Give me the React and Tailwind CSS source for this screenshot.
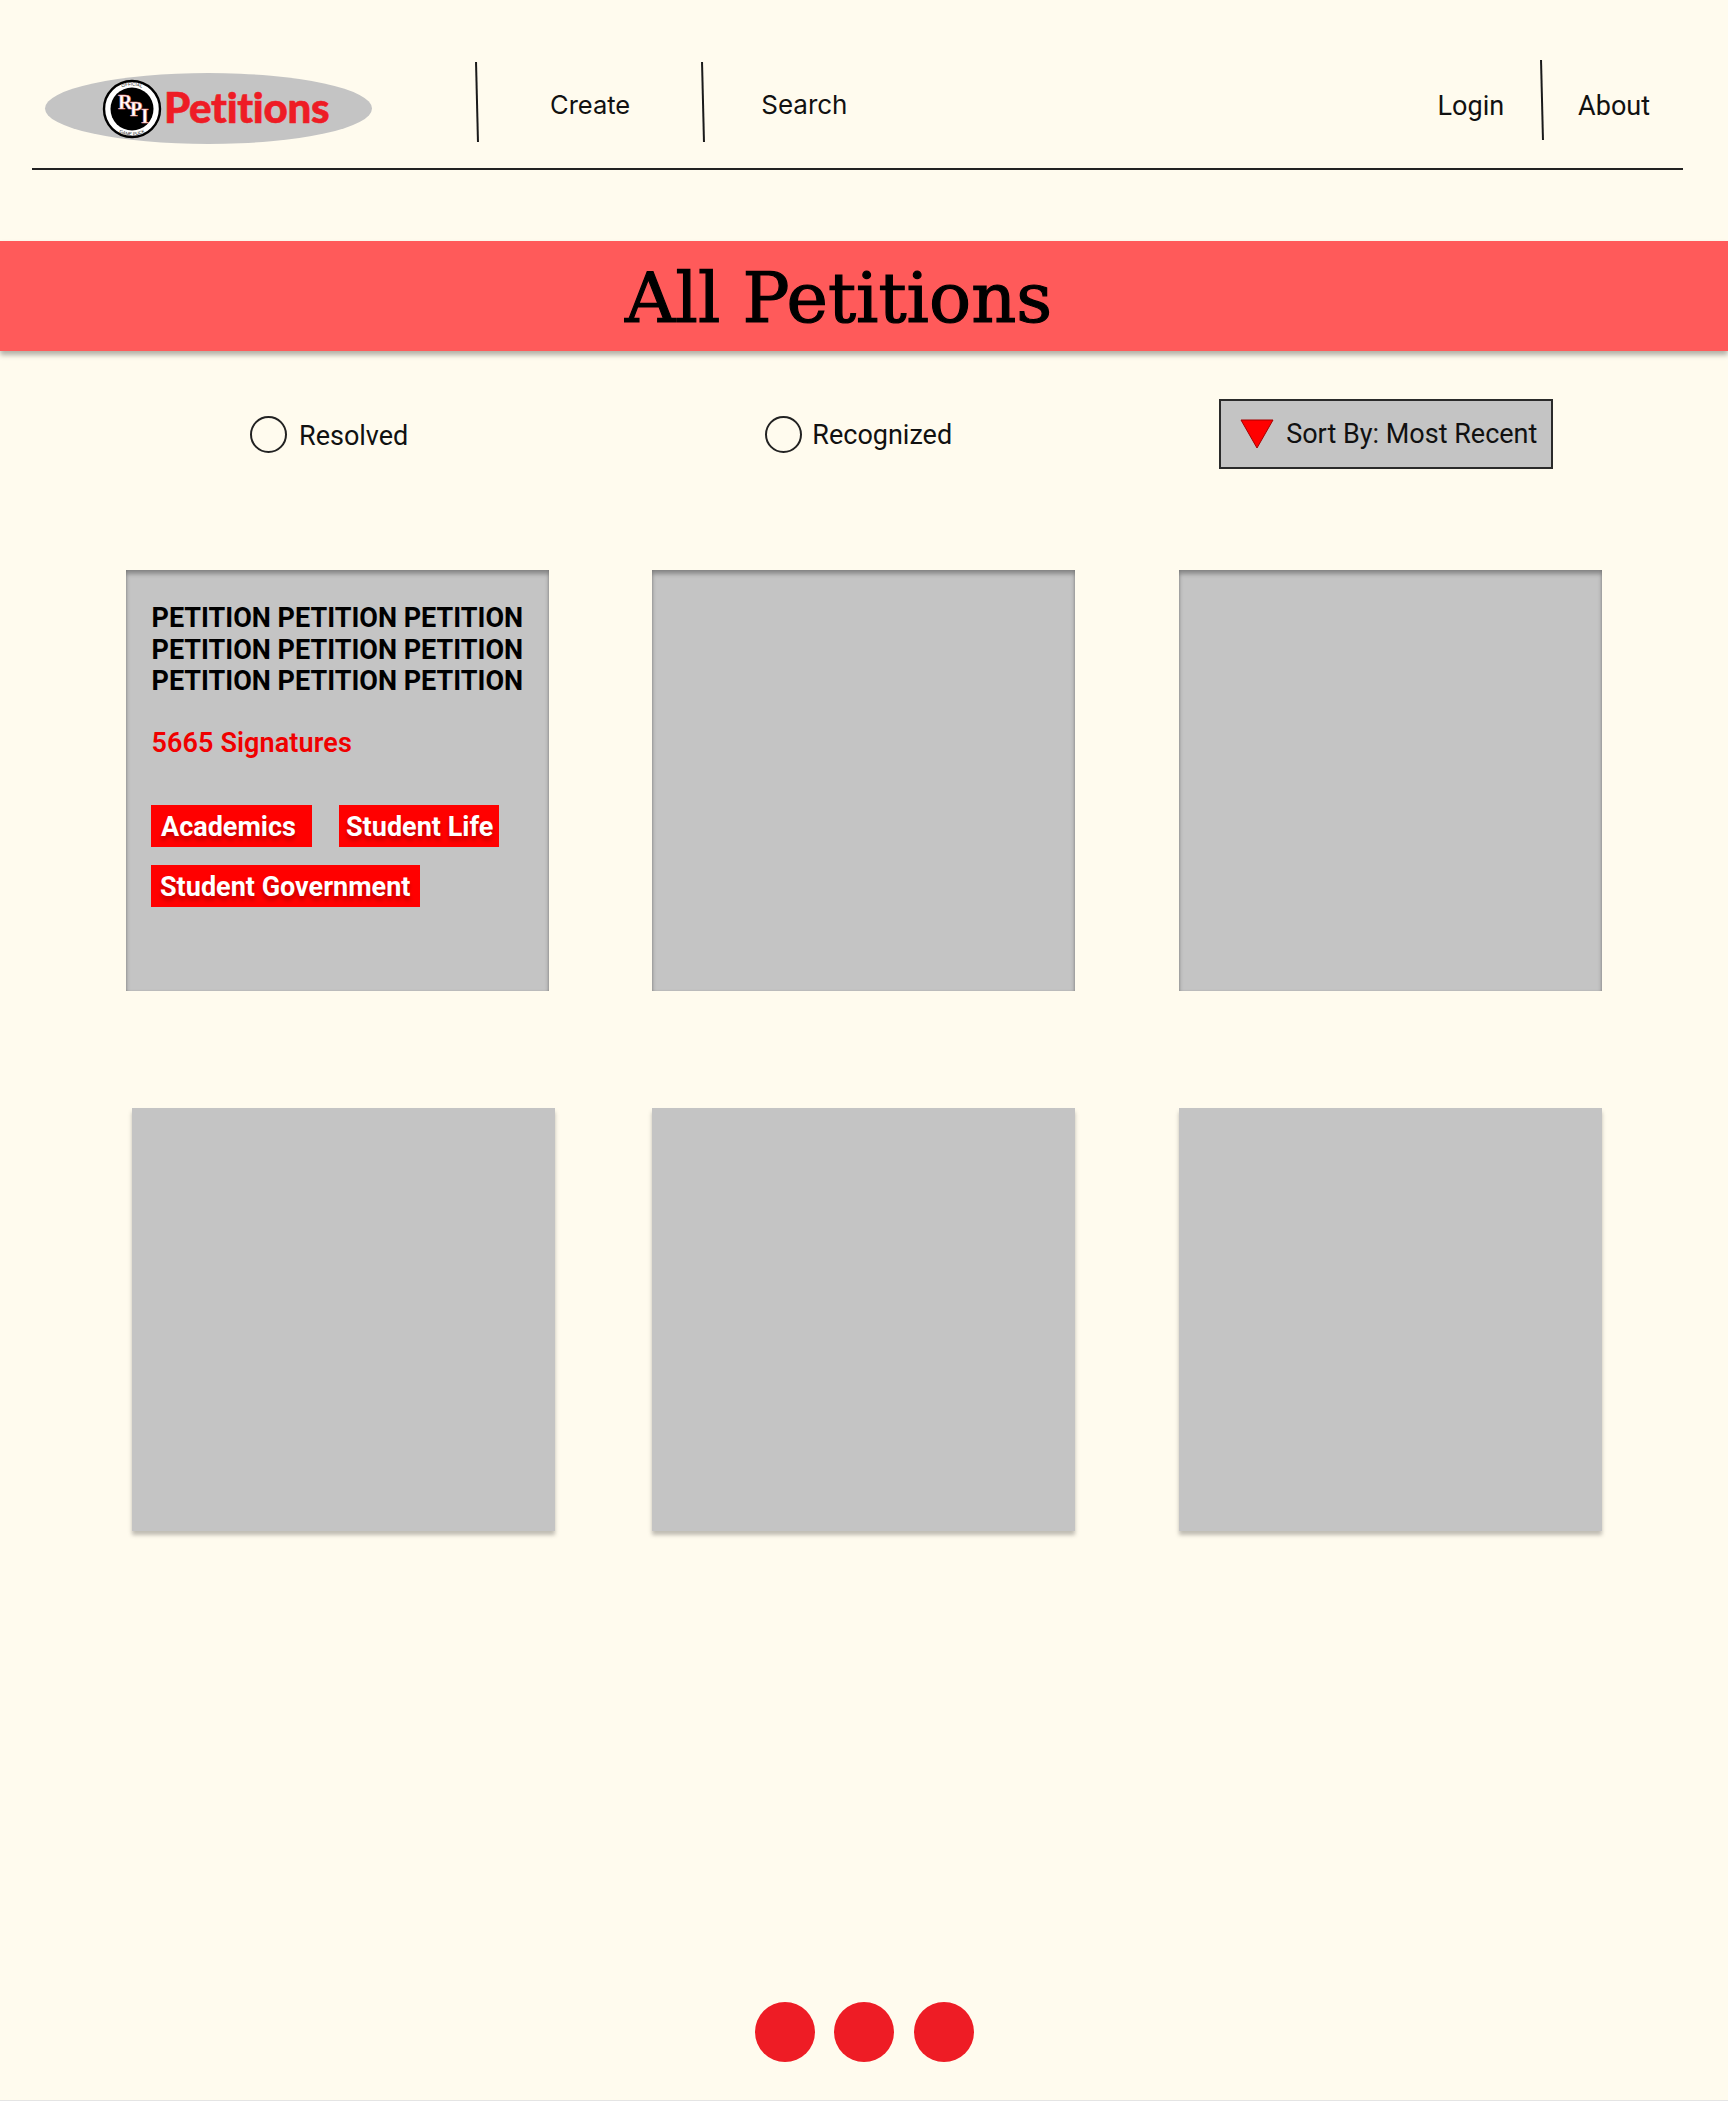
const roboto = "font-['Roboto',sans-serif]";

function Divider({ className }) {
  return <div className={"h-[80px] w-[2px] shrink-0 rotate-[-1.4deg] bg-[#1a1a1a] " + className} />;
}

function NavText({ children, className }) {
  return <span className={"leading-[32px] text-[#111] " + className}>{children}</span>;
}

function Logo() {
  return (
    <svg width="62" height="62" viewBox="0 0 62 62" className="shrink-0">
      <defs>
        <path id="arcTop" d="M7.5 31a23.5 23.5 0 0 1 47 0" />
        <path id="arcBottom" d="M4.5 31a26.5 26.5 0 0 0 53 0" />
      </defs>
      <circle cx="31" cy="31" r="28" fill="#fff" stroke="#000" strokeWidth="2.4" />
      <circle cx="31" cy="31" r="21.5" fill="#000" />
      <text fontSize="4.5" fontFamily="Liberation Sans" fill="#222" textAnchor="middle">
        <textPath href="#arcTop" startOffset="50%">OFFICIAL</textPath>
      </text>
      <text fontSize="4.5" fontFamily="Liberation Sans" fill="#222" textAnchor="middle">
        <textPath href="#arcBottom" startOffset="50%">GAME PUCK</textPath>
      </text>
      <g fontFamily="Liberation Serif" fontWeight="700" fontSize="20" fill="#fff" stroke="#f08a8a" strokeWidth="0.5">
        <text x="17" y="31">R</text>
        <text x="29" y="38">P</text>
        <text x="40" y="45">I</text>
      </g>
    </svg>
  );
}

function Radio({ label, className, textClass }) {
  return (
    <div className={"flex items-center " + className}>
      <span className="h-[37px] w-[37px] shrink-0 rounded-full border-2 border-[#222]" />
      <span className={roboto + " text-[27px] leading-[32px] text-[#111] " + textClass}>{label}</span>
    </div>
  );
}

function Tag({ children, className }) {
  return (
    <span className={"flex h-[42px] items-center bg-[#ff0000] pt-[2px] text-[27px] font-bold text-white [text-shadow:0_4px_4px_rgba(0,0,0,0.25)] " + className}>
      {children}
    </span>
  );
}

const insetCard = "h-[421px] w-[423px] shrink-0 bg-[#c4c4c4] shadow-[inset_0_4px_4px_rgba(0,0,0,0.3),inset_1px_0_2px_rgba(0,0,0,0.08),inset_-1px_0_2px_rgba(0,0,0,0.08)]";
const outerCard = "h-[423px] w-[423px] shrink-0 bg-[#c4c4c4] shadow-[0_4px_4px_rgba(0,0,0,0.25)]";

export default function App() {
  return (
    <div className={"h-[2101px] w-[1728px] overflow-hidden border-b border-[#e4e4e4] bg-[#fffbee] " + roboto}>
      <header className="ml-[32px] flex h-[170px] w-[1651px] items-start border-b-2 border-[#222] font-['Inter',sans-serif]">
        <div className="ml-[13px] mt-[73px] flex h-[71px] w-[327px] items-center rounded-[50%] bg-[#c4c4c4] pl-[56px]">
          <Logo />
          <span className="mb-[4px] ml-[1px] font-['Lato',sans-serif] text-[42px] font-black leading-none tracking-[-0.3px] text-[#ee1c25] [-webkit-text-stroke:0.6px_#ee1c25]">Petitions</span>
        </div>
        <Divider className="ml-[104px] mt-[62px]" />
        <NavText className="ml-[72px] mt-[89px] text-[25.5px]">Create</NavText>
        <Divider className="ml-[72px] mt-[62px]" />
        <NavText className="ml-[57px] mt-[89px] text-[26px]">Search</NavText>
        <NavText className="ml-[auto] mt-[90px] font-['Roboto',sans-serif] text-[27px]">Login</NavText>
        <Divider className="ml-[37px] mt-[60px]" />
        <NavText className="ml-[35px] mr-[33px] mt-[90px] font-['Roboto',sans-serif] text-[27px]">About</NavText>
      </header>

      <div className="mt-[71px] flex h-[110px] items-center bg-[#ff5a5a] pl-[625px] shadow-[0_4px_5px_rgba(0,0,0,0.3)]">
        <h1 className="mt-[4px] font-['DejaVu_Serif',serif] text-[70px] font-normal leading-none text-black [-webkit-text-stroke:1.2px_#000]">All Petitions</h1>
      </div>

      <div className="mt-[48px] flex h-[70px] items-center">
        <Radio label="Resolved" className="ml-[250px]" textClass="ml-[12px] mt-[4px]" />
        <Radio label="Recognized" className="ml-[357px]" textClass="ml-[10px] mt-[2px]" />
        <div className="ml-[267px] flex h-[70px] w-[334px] items-center border-2 border-[#2a2a2a] bg-[#c4c4c4] pl-[19px]">
          <svg width="34" height="30" viewBox="0 0 34 30" className="shrink-0">
            <path d="M1 1h32L17 29z" fill="#ff0000" stroke="#a50000" strokeWidth="1" />
          </svg>
          <span className="ml-[12px] text-[27px] leading-[32px] text-[#111]">Sort By: Most Recent</span>
        </div>
      </div>

      <div className="mt-[101px] flex pl-[126px]">
        <div className={insetCard + " pl-[25px] pt-[33px]"}>
          <p className="ml-[0.5px] w-[385px] text-[27px] font-bold leading-[31.5px] text-black">
            PETITION PETITION PETITION PETITION PETITION PETITION PETITION PETITION PETITION
          </p>
          <p className="ml-[0.5px] mt-[29.5px] text-[27px] font-semibold leading-[32px] tracking-[0.1px] text-[#f00000]">5665 Signatures</p>
          <div className="mt-[46px] flex">
            <Tag className="w-[161px] pl-[10px]">Academics</Tag>
            <Tag className="ml-[27px] w-[160px] pl-[7px]">Student Life</Tag>
          </div>
          <div className="mt-[18px] flex">
            <Tag className="w-[269px] pl-[9px]">Student Government</Tag>
          </div>
        </div>
        <div className={insetCard + " ml-[103px]"} />
        <div className={insetCard + " ml-[104px]"} />
      </div>

      <div className="mt-[117px] flex pl-[132px]">
        <div className={outerCard} />
        <div className={outerCard + " ml-[97px]"} />
        <div className={outerCard + " ml-[104px]"} />
      </div>

      <div className="mt-[471px] flex justify-center gap-[19.5px]">
        <span className="h-[60px] w-[60px] rounded-full bg-[#ee1c25]" />
        <span className="h-[60px] w-[60px] rounded-full bg-[#ee1c25]" />
        <span className="h-[60px] w-[60px] rounded-full bg-[#ee1c25]" />
      </div>
    </div>
  );
}
